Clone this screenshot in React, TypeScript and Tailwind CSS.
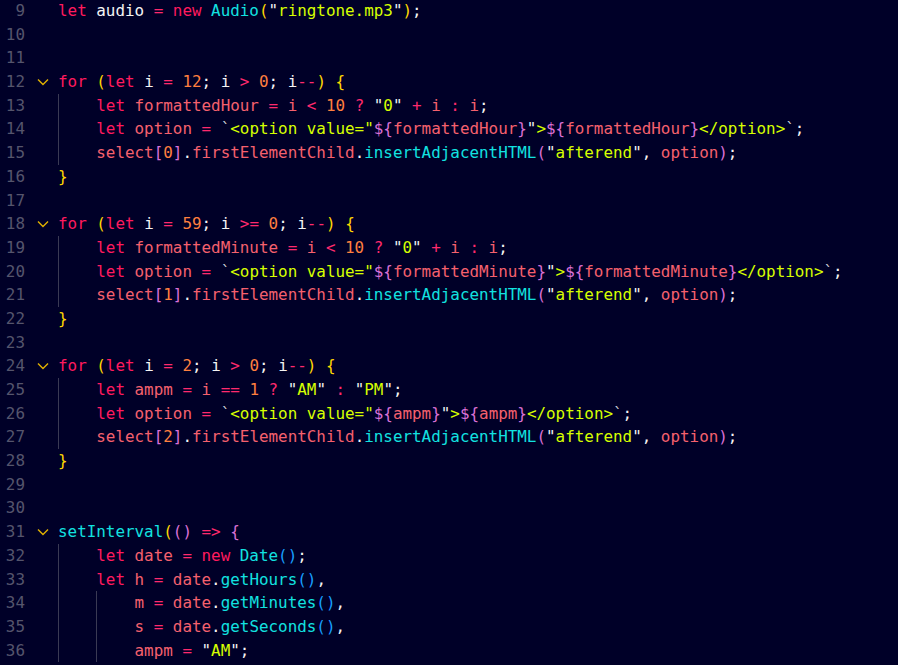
import React from "react";

type Tok = [string, string];

const K = "text-[#ff1a5e]"; // keyword
const V = "text-[#f5606e]"; // variable
const W = "text-[#f4f4f4]"; // plain / punctuation
const O = "text-[#ff2a6d]"; // operator
const N = "text-[#ff7f3f]"; // number
const S = "text-[#d7ff00]"; // string
const F = "text-[#12e2e0]"; // function
const B1 = "text-[#ffd700]";
const B2 = "text-[#da70d6]";
const B3 = "text-[#179fff]";
const T = "text-[#cfcfd8]"; // backtick

const str = (s: string): Tok[] => [['"', W], [s, S], ['"', W]];

const lines: { n: number; fold?: boolean; guides: number; toks: Tok[] }[] = [
  { n: 9, guides: 0, toks: [["let", K], [" audio", W], [" = ", O], ["new", K], [" Audio", F], ["(", B1], ...str("ringtone.mp3"), [")", B1], [";", W]] },
  { n: 10, guides: 0, toks: [] },
  { n: 11, guides: 0, toks: [] },
  { n: 12, fold: true, guides: 0, toks: [["for", K], [" ", W], ["(", B1], ["let", K], [" i", W], [" = ", O], ["12", N], [";", W], [" i", W], [" > ", O], ["0", N], [";", W], [" i", W], ["--", O], [")", B1], [" {", B1]] },
  { n: 13, guides: 1, toks: [["    ", W], ["let", K], [" formattedHour", V], [" = ", O], ["i", V], [" < ", O], ["10", N], [" ? ", O], ...str("0"), [" + ", O], ["i", V], [" : ", O], ["i", V], [";", W]] },
  { n: 14, guides: 1, toks: [["    ", W], ["let", K], [" option", V], [" = ", O], ["`", T], ['<option value="', S], ["${", B2], ["formattedHour", V], ["}", B2], ['"', W], [">", S], ["${", B2], ["formattedHour", V], ["}", B2], ["</option>", S], ["`", T], [";", W]] },
  { n: 15, guides: 1, toks: [["    ", W], ["select", V], ["[", B2], ["0", N], ["]", B2], [".", W], ["firstElementChild", V], [".", W], ["insertAdjacentHTML", F], ["(", B2], ...str("afterend"), [", ", W], ["option", V], [")", B2], [";", W]] },
  { n: 16, guides: 0, toks: [["}", B1]] },
  { n: 17, guides: 0, toks: [] },
  { n: 18, fold: true, guides: 0, toks: [["for", K], [" ", W], ["(", B1], ["let", K], [" i", W], [" = ", O], ["59", N], [";", W], [" i", W], [" >= ", O], ["0", N], [";", W], [" i", W], ["--", O], [")", B1], [" {", B1]] },
  { n: 19, guides: 1, toks: [["    ", W], ["let", K], [" formattedMinute", V], [" = ", O], ["i", V], [" < ", O], ["10", N], [" ? ", O], ...str("0"), [" + ", O], ["i", V], [" : ", O], ["i", V], [";", W]] },
  { n: 20, guides: 1, toks: [["    ", W], ["let", K], [" option", V], [" = ", O], ["`", T], ['<option value="', S], ["${", B2], ["formattedMinute", V], ["}", B2], ['"', W], [">", S], ["${", B2], ["formattedMinute", V], ["}", B2], ["</option>", S], ["`", T], [";", W]] },
  { n: 21, guides: 1, toks: [["    ", W], ["select", V], ["[", B2], ["1", N], ["]", B2], [".", W], ["firstElementChild", V], [".", W], ["insertAdjacentHTML", F], ["(", B2], ...str("afterend"), [", ", W], ["option", V], [")", B2], [";", W]] },
  { n: 22, guides: 0, toks: [["}", B1]] },
  { n: 23, guides: 0, toks: [] },
  { n: 24, fold: true, guides: 0, toks: [["for", K], [" ", W], ["(", B1], ["let", K], [" i", W], [" = ", O], ["2", N], [";", W], [" i", W], [" > ", O], ["0", N], [";", W], [" i", W], ["--", O], [")", B1], [" {", B1]] },
  { n: 25, guides: 1, toks: [["    ", W], ["let", K], [" ampm", V], [" = ", O], ["i", V], [" == ", O], ["1", N], [" ? ", O], ...str("AM"), [" : ", O], ...str("PM"), [";", W]] },
  { n: 26, guides: 1, toks: [["    ", W], ["let", K], [" option", V], [" = ", O], ["`", T], ['<option value="', S], ["${", B2], ["ampm", V], ["}", B2], ['"', W], [">", S], ["${", B2], ["ampm", V], ["}", B2], ["</option>", S], ["`", T], [";", W]] },
  { n: 27, guides: 1, toks: [["    ", W], ["select", V], ["[", B2], ["2", N], ["]", B2], [".", W], ["firstElementChild", V], [".", W], ["insertAdjacentHTML", F], ["(", B2], ...str("afterend"), [", ", W], ["option", V], [")", B2], [";", W]] },
  { n: 28, guides: 0, toks: [["}", B1]] },
  { n: 29, guides: 0, toks: [] },
  { n: 30, guides: 0, toks: [] },
  { n: 31, fold: true, guides: 0, toks: [["setInterval", F], ["(", B1], ["(", B2], [")", B2], [" => ", O], ["{", B2]] },
  { n: 32, guides: 1, toks: [["    ", W], ["let", K], [" date", V], [" = ", O], ["new", K], [" Date", F], ["()", B3], [";", W]] },
  { n: 33, guides: 1, toks: [["    ", W], ["let", K], [" h", V], [" = ", O], ["date", V], [".", W], ["getHours", F], ["()", B3], [",", W]] },
  { n: 34, guides: 2, toks: [["        ", W], ["m", V], [" = ", O], ["date", V], [".", W], ["getMinutes", F], ["()", B3], [",", W]] },
  { n: 35, guides: 2, toks: [["        ", W], ["s", V], [" = ", O], ["date", V], [".", W], ["getSeconds", F], ["()", B3], [",", W]] },
  { n: 36, guides: 2, toks: [["        ", W], ["ampm", V], [" = ", O], ...str("AM"), [";", W]] },
];

function Chevron() {
  return (
    <svg width="12" height="8" viewBox="0 0 12 8" fill="none">
      <path d="M1 1.5 L6 6.5 L11 1.5" stroke="#e0b000" strokeWidth="1.4" />
    </svg>
  );
}

export default function App() {
  return (
    <div
      className="w-[898px] h-[665px] overflow-hidden bg-[#000028] text-[15.9px]"
      style={{ fontFamily: '"DejaVu Sans Mono", "Liberation Mono", monospace' }}
    >
      <div className="mt-[-1px] flex flex-col">
        {lines.map((l) => (
          <div key={l.n} className="flex h-[23.7px] items-center leading-[23.7px]">
            <div className="w-[25px] shrink-0 text-right text-[#55556c]">{l.n}</div>
            <div className="flex w-[33px] shrink-0 items-center justify-center pl-[3px]">
              {l.fold ? <Chevron /> : null}
            </div>
            <div className="relative h-full flex-1 whitespace-pre">
              {l.guides >= 1 && <div className="absolute left-0 top-0 h-full w-px bg-[#3a3a54]" />}
              {l.guides >= 2 && <div className="absolute left-[4ch] top-0 h-full w-px bg-[#3a3a54]" />}
              {l.toks.map((t, i) => (
                <span key={i} className={t[1]}>
                  {t[0]}
                </span>
              ))}
            </div>
          </div>
        ))}
      </div>
    </div>
  );
}
